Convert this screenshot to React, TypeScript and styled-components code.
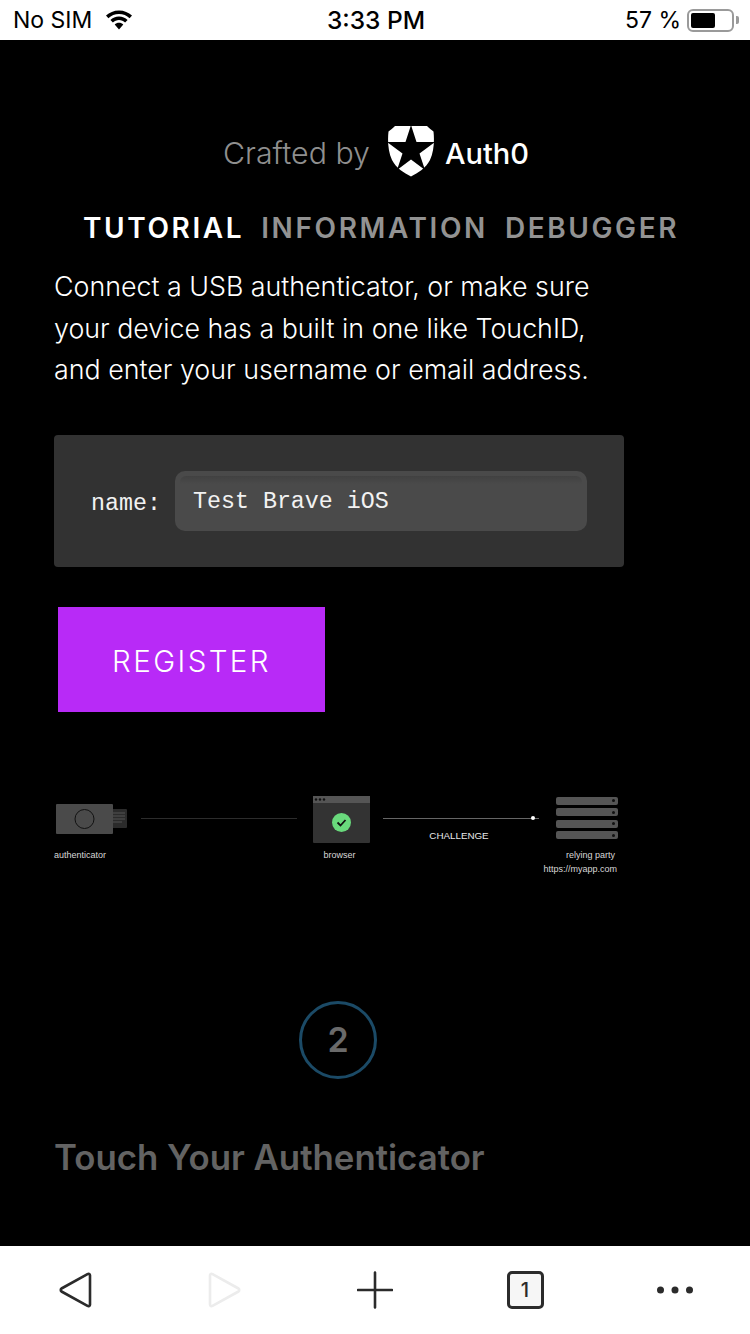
import React from 'react'
import styled, { createGlobalStyle } from 'styled-components'

const GlobalStyle = createGlobalStyle`
  html, body {
    margin: 0;
    padding: 0;
    background: #000;
  }
  * {
    box-sizing: border-box;
  }
`

const App: React.FC = () => (
  <>
    <GlobalStyle />
    <Screen>
      <StatusBar>
        <StatusLeft>
          <span>No SIM</span>
          <svg width="28" height="22" viewBox="0 0 28 22">
            <path d="M14 1.500C8.800 1.500 4.400 3.500 1 6.600l2.400 2.600C6.200 6.600 9.900 5 14 5s7.800 1.600 10.600 4.200L27 6.600C23.600 3.500 19.200 1.500 14 1.500z" fill="#000" />
            <path d="M14 7.600c-3.400 0-6.400 1.300-8.600 3.400l2.500 2.600c1.600-1.500 3.700-2.500 6.100-2.500s4.500 1 6.100 2.500l2.500-2.600C20.400 8.900 17.400 7.600 14 7.600z" fill="#000" />
            <path d="M14 13.700c-1.700 0-3.200.6-4.300 1.700L14 20.500l4.300-5.100c-1.100-1.100-2.600-1.700-4.300-1.700z" fill="#000" />
          </svg>
        </StatusLeft>
        <StatusTime>3:33 PM</StatusTime>
        <StatusRight>
          <span>57 %</span>
          <BatteryShell>
            <BatteryLevel />
          </BatteryShell>
          <BatteryCap />
        </StatusRight>
      </StatusBar>

      <Main>
        <CraftedRow>
          <CraftedText>Crafted by</CraftedText>
          <AuthLogo width="46" height="51" viewBox="0 0 46 51">
            <path d="M7 0H39C41 2 43.500 4 45.500 5.500 46.500 14 46 26 42 34 38 42 30 47 23 50.500 16 47 8 42 4 34 0 26-.5 14 .5 5.500 2.500 4 5 2 7 0z" fill="#fff" />
            <path d="M23-1L28.500 16H47L31.500 27.500 37 44 23 33.500 9 44 14.500 27.500-1 16H17.500z" fill="#000" />
          </AuthLogo>
          <AuthText>Auth0</AuthText>
        </CraftedRow>

        <Tabs>
          <Tab $active>TUTORIAL</Tab>
          <Tab>INFORMATION</Tab>
          <Tab>DEBUGGER</Tab>
        </Tabs>

        <Intro>
          Connect a USB authenticator, or make sure
          <br />
          your device has a built in one like TouchID,
          <br />
          and enter your username or email address.
        </Intro>

        <FormPanel>
          <FieldLabel>name:</FieldLabel>
          <FieldInput>Test Brave iOS</FieldInput>
        </FormPanel>

        <RegisterButton>REGISTER</RegisterButton>

        <Diagram>
          <AuthenticatorNode>
            <svg width="74" height="32" viewBox="0 0 74 32">
              <rect x="57" y="6" width="16" height="19" rx="1" fill="#2b2b2b" />
              <path d="M59 10h12M59 13h12M59 16h12M59 19h9" stroke="#555" strokeWidth="1" />
              <rect x="2" y="1" width="57" height="30" rx="1" fill="#4a4a4a" />
              <circle cx="30.500" cy="16" r="9.500" fill="none" stroke="#111" strokeWidth="1" />
            </svg>
            <NodeLabel $top={14}>authenticator</NodeLabel>
          </AuthenticatorNode>

          <Link>
            <LinkLine />
          </Link>

          <BrowserNode>
            <svg width="57" height="47" viewBox="0 0 57 47">
              <rect x="0" y="0" width="57" height="47" rx="1" fill="#333" />
              <rect x="0" y="0" width="57" height="7" fill="#555" />
              <circle cx="3" cy="3.500" r="1.200" fill="#111" />
              <circle cx="7" cy="3.500" r="1.200" fill="#111" />
              <circle cx="11" cy="3.500" r="1.200" fill="#111" />
              <circle cx="28.500" cy="26.500" r="9.500" fill="#69d97c" />
              <path d="M24.500 26.500l3 3 5-5.500" fill="none" stroke="#111" strokeWidth="1.800" />
            </svg>
            <NodeLabel $top={6} $right={4}>browser</NodeLabel>
          </BrowserNode>

          <Link>
            <LinkLine $bright>
              <LinkDot />
            </LinkLine>
            <LinkCaption>CHALLENGE</LinkCaption>
          </Link>

          <ServerNode>
            <ServerStack>
              {[0, 1, 2, 3].map((i) => (
                <ServerSlot key={i} />
              ))}
            </ServerStack>
            <NodeLabel $top={6} $right={2}>relying party</NodeLabel>
            <NodeUrl>https://myapp.com</NodeUrl>
          </ServerNode>
        </Diagram>

        <StepCircle>2</StepCircle>
        <StepTitle>Touch Your Authenticator</StepTitle>
      </Main>

      <BottomBar>
        <BarSlot>
          <svg width="34" height="38" viewBox="0 0 34 38">
            <path d="M29.500 3.200C30.500 2.400 32 3 32 4.300V33.700C32 35 30.500 35.600 29.500 34.800L3.500 20.500C2.500 19.700 2.500 18.300 3.500 17.500Z" fill="none" stroke="#2b2b2b" strokeWidth="2.600" strokeLinejoin="round" />
          </svg>
        </BarSlot>
        <BarSlot>
          <svg width="34" height="38" viewBox="0 0 34 38">
            <path d="M4.500 3.200C3.500 2.400 2 3 2 4.300V33.700C2 35 3.500 35.600 4.500 34.800L30.500 20.500C31.500 19.700 31.500 18.300 30.500 17.500Z" fill="none" stroke="#ececec" strokeWidth="2.600" strokeLinejoin="round" />
          </svg>
        </BarSlot>
        <BarSlot>
          <svg width="36" height="38" viewBox="0 0 36 38">
            <path d="M18 1.500v35M1 19h34" fill="none" stroke="#2b2b2b" strokeWidth="2.600" strokeLinecap="round" />
          </svg>
        </BarSlot>
        <BarSlot>
          <TabCount>1</TabCount>
        </BarSlot>
        <BarSlot>
          <svg width="38" height="10" viewBox="0 0 38 10">
            <circle cx="4.500" cy="5" r="3.500" fill="#2b2b2b" />
            <circle cx="19" cy="5" r="3.500" fill="#2b2b2b" />
            <circle cx="33.500" cy="5" r="3.500" fill="#2b2b2b" />
          </svg>
        </BarSlot>
      </BottomBar>
    </Screen>
  </>
)

const Screen = styled.div`
  display: flex;
  flex-direction: column;
  width: 750px;
  height: 1334px;
  overflow: hidden;
  background: #000;
  font-family: 'Inter', 'Liberation Sans', sans-serif;
`

const StatusBar = styled.div`
  display: grid;
  grid-template-columns: 1fr auto 1fr;
  align-items: center;
  height: 40px;
  padding: 0 11px 0 13px;
  background: #fff;
  color: #000;
  font-size: 23px;
`

const StatusLeft = styled.div`
  display: flex;
  align-items: center;
  gap: 13px;
`

const StatusTime = styled.div`
  font-size: 24.5px;
  font-weight: 500;
`

const StatusRight = styled.div`
  display: flex;
  align-items: center;
  justify-content: flex-end;
`

const BatteryShell = styled.div`
  width: 47px;
  height: 23px;
  margin-left: 6px;
  padding: 2px;
  border: 2px solid #9a9a9a;
  border-radius: 6px;
`

const BatteryLevel = styled.div`
  width: 24px;
  height: 100%;
  border-radius: 2px;
  background: #000;
`

const BatteryCap = styled.div`
  width: 3px;
  height: 8px;
  margin-left: 2px;
  border-radius: 0 2px 2px 0;
  background: #9a9a9a;
`

const Main = styled.div`
  flex: 1;
  padding: 86px 0 0 54px;
  background: #000;
`

const CraftedRow = styled.div`
  display: flex;
  align-items: center;
  height: 54px;
  margin-left: 169px;
`

const CraftedText = styled.span`
  margin-right: 18px;
  color: #8f8f8f;
  font-size: 30.3px;
  font-weight: 300;
  white-space: nowrap;
`

const AuthLogo = styled.svg`
  margin-top: -3px;
`

const AuthText = styled.span`
  margin-left: 11px;
  color: #fff;
  font-size: 29px;
  font-weight: 500;
`

const Tabs = styled.div`
  display: flex;
  gap: 17px;
  margin: 31px 0 0 29px;
`

const Tab = styled.div<{ $active?: boolean }>`
  color: ${(props) => (props.$active ? '#fff' : '#929292')};
  font-size: 28px;
  font-weight: 600;
  line-height: 34px;
  letter-spacing: 2.6px;
  white-space: nowrap;
`

const Intro = styled.p`
  margin: 21px 0 0;
  color: #fff;
  font-size: 26.8px;
  font-weight: 300;
  line-height: 41.5px;
  white-space: nowrap;
`

const FormPanel = styled.div`
  display: flex;
  align-items: center;
  width: 570px;
  height: 132px;
  margin-top: 44px;
  padding: 0 37px;
  border-radius: 4px;
  background: #323232;
  color: #f2f2f2;
  font-family: 'Liberation Mono', 'DejaVu Sans Mono', monospace;
  font-size: 23.3px;
`

const FieldLabel = styled.span`
  flex-shrink: 0;
  width: 84px;
  padding-top: 6px;
`

const FieldInput = styled.div`
  position: relative;
  display: flex;
  align-items: center;
  width: 412px;
  height: 60px;
  padding: 3px 18px 0;
  border-radius: 10px;
  background: #4a4a4a;
  &::before {
    content: '';
    position: absolute;
    top: 5px;
    left: 5px;
    right: 5px;
    height: 8px;
    border-radius: 6px 6px 0 0;
    background: linear-gradient(#414141, #4a4a4a);
  }
`

const RegisterButton = styled.div`
  display: flex;
  align-items: center;
  justify-content: center;
  width: 267px;
  height: 105px;
  margin: 40px 0 0 4px;
  padding-top: 3px;
  background: #b82af7;
  color: #fff;
  font-size: 29.5px;
  font-weight: 300;
  letter-spacing: 2.4px;
`

const Diagram = styled.div`
  display: flex;
  align-items: flex-start;
  margin-top: 84px;
  color: #d8d8d8;
  font-family: 'Liberation Sans', Arial, sans-serif;
  font-size: 9px;
`

const AuthenticatorNode = styled.div`
  display: flex;
  flex-direction: column;
  width: 87px;
  padding-top: 7px;
  svg {
    display: block;
  }
`

const BrowserNode = styled.div`
  display: flex;
  flex-direction: column;
  align-items: center;
  width: 57px;
  margin: 0 13px 0 16px;
  svg {
    display: block;
  }
`

const ServerNode = styled.div`
  display: flex;
  flex-direction: column;
  align-items: flex-end;
  width: 78px;
`

const NodeLabel = styled.div<{ $top: number; $right?: number }>`
  margin-top: ${(props) => props.$top}px;
  margin-right: ${(props) => props.$right || 0}px;
  line-height: 12px;
  white-space: nowrap;
`

const NodeUrl = styled.div`
  margin-top: 2px;
  line-height: 12px;
  white-space: nowrap;
`

const ServerStack = styled.div`
  display: flex;
  flex-direction: column;
  align-self: flex-start;
  gap: 3.5px;
  width: 62px;
  height: 45px;
  margin: 1px 0 1px 17px;
`

const ServerSlot = styled.div`
  position: relative;
  height: 8px;
  border-radius: 2px;
  background: #555;
  &::after {
    content: '';
    position: absolute;
    top: 2.5px;
    right: 3px;
    width: 3px;
    height: 3px;
    border-radius: 50%;
    background: #111;
  }
`

const Link = styled.div`
  display: flex;
  flex-direction: column;
  align-items: center;
  width: 156px;
  padding-top: 22px;
`

const LinkLine = styled.div<{ $bright?: boolean }>`
  position: relative;
  width: 100%;
  height: 1px;
  background: ${(props) => (props.$bright ? '#666' : '#2c2c2c')};
`

const LinkDot = styled.span`
  position: absolute;
  top: -1.5px;
  right: 4px;
  width: 4px;
  height: 4px;
  border-radius: 50%;
  background: #fff;
`

const LinkCaption = styled.div`
  margin: 11px 4px 0 0;
  color: #e8e8e8;
  font-size: 9.8px;
  line-height: 12px;
`

const StepCircle = styled.div`
  display: flex;
  align-items: center;
  justify-content: center;
  width: 78px;
  height: 78px;
  margin: 126px 0 0 245px;
  border: 3px solid #1b4a66;
  border-radius: 50%;
  color: #6a6a6a;
  font-size: 34px;
  font-weight: 600;
`

const StepTitle = styled.h2`
  margin: 55px 0 0;
  color: #636363;
  font-size: 34.8px;
  font-weight: 600;
  line-height: 46px;
  white-space: nowrap;
`

const BottomBar = styled.div`
  display: grid;
  grid-template-columns: repeat(5, 150px);
  align-items: center;
  height: 88px;
  background: #fff;
`

const BarSlot = styled.div`
  display: flex;
  align-items: center;
  justify-content: center;
`

const TabCount = styled.div`
  display: flex;
  align-items: center;
  justify-content: center;
  width: 37px;
  height: 38px;
  border: 3px solid #2b2b2b;
  border-radius: 5px;
  background: #f6f6f6;
  color: #2b2b2b;
  font-size: 20px;
  font-weight: 500;
`

export default App
